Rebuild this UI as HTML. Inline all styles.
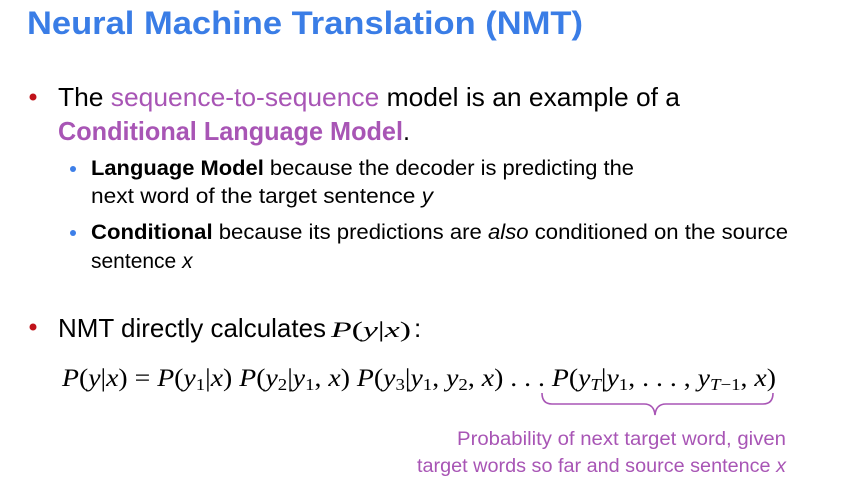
<!DOCTYPE html>
<html><head><meta charset="utf-8"><style>
html,body{margin:0;padding:0;background:#fff;width:856px;height:484px;overflow:hidden}
svg{display:block}
.s{font-family:"Liberation Sans",sans-serif}
.m{font-family:"Liberation Serif",serif}
</style></head><body>
<svg width="856" height="484" viewBox="0 0 856 484" xmlns="http://www.w3.org/2000/svg">
<text class="s" x="27" y="34" font-size="32" font-weight="bold" fill="#3a7de6" textLength="556" lengthAdjust="spacingAndGlyphs">Neural Machine Translation (NMT)</text>

<circle cx="33" cy="97" r="3.5" fill="#c0121a"/>
<text class="s" x="58" y="106" font-size="26" fill="#000" textLength="622" lengthAdjust="spacingAndGlyphs">The <tspan fill="#a855b5">sequence-to-sequence</tspan> model is an example of a</text>
<text class="s" x="58" y="140" font-size="26" fill="#000" textLength="352" lengthAdjust="spacingAndGlyphs"><tspan fill="#a855b5" font-weight="bold">Conditional Language Model</tspan>.</text>

<circle cx="73" cy="169" r="3" fill="#3d7fe8"/>
<text class="s" x="91" y="175" font-size="21" fill="#000" textLength="543" lengthAdjust="spacingAndGlyphs"><tspan font-weight="bold">Language Model</tspan> because the decoder is predicting the</text>
<text class="s" x="91" y="203" font-size="21" fill="#000" textLength="342" lengthAdjust="spacingAndGlyphs">next word of the target sentence <tspan font-style="italic">y</tspan></text>

<circle cx="73" cy="233" r="3" fill="#3d7fe8"/>
<text class="s" x="91" y="239" font-size="21" fill="#000" textLength="697" lengthAdjust="spacingAndGlyphs"><tspan font-weight="bold">Conditional</tspan> because its predictions are <tspan font-style="italic">also</tspan> conditioned on the source</text>
<text class="s" x="91" y="268" font-size="21" fill="#000">sentence <tspan font-style="italic">x</tspan></text>

<circle cx="33" cy="327" r="3.5" fill="#c0121a"/>
<text class="s" x="58" y="337" font-size="26" fill="#000" textLength="268" lengthAdjust="spacingAndGlyphs">NMT directly calculates</text>
<text class="m" x="331" y="337" font-size="22" fill="#000" textLength="80" lengthAdjust="spacingAndGlyphs"><tspan font-style="italic">P</tspan>(<tspan font-style="italic">y</tspan>|<tspan font-style="italic">x</tspan>)</text>
<text class="s" x="414" y="337" font-size="26" fill="#000">:</text>

<text class="m" x="62" y="386" font-size="25" fill="#000" textLength="714" lengthAdjust="spacingAndGlyphs"><tspan font-style="italic">P</tspan>(<tspan font-style="italic">y</tspan>|<tspan font-style="italic">x</tspan>) = <tspan font-style="italic">P</tspan>(<tspan font-style="italic">y</tspan><tspan font-size="17" dy="4">1</tspan><tspan dy="-4">|</tspan><tspan font-style="italic">x</tspan>) <tspan font-style="italic">P</tspan>(<tspan font-style="italic">y</tspan><tspan font-size="17" dy="4">2</tspan><tspan dy="-4">|</tspan><tspan font-style="italic">y</tspan><tspan font-size="17" dy="4">1</tspan><tspan dy="-4">, </tspan><tspan font-style="italic">x</tspan>) <tspan font-style="italic">P</tspan>(<tspan font-style="italic">y</tspan><tspan font-size="17" dy="4">3</tspan><tspan dy="-4">|</tspan><tspan font-style="italic">y</tspan><tspan font-size="17" dy="4">1</tspan><tspan dy="-4">, </tspan><tspan font-style="italic">y</tspan><tspan font-size="17" dy="4">2</tspan><tspan dy="-4">, </tspan><tspan font-style="italic">x</tspan>) . . . <tspan font-style="italic">P</tspan>(<tspan font-style="italic">y</tspan><tspan font-size="17" dy="4" font-style="italic">T</tspan><tspan dy="-4">|</tspan><tspan font-style="italic">y</tspan><tspan font-size="17" dy="4">1</tspan><tspan dy="-4">, . . . , </tspan><tspan font-style="italic">y</tspan><tspan font-size="17" dy="4"><tspan font-style="italic">T</tspan>−1</tspan><tspan dy="-4">, </tspan><tspan font-style="italic">x</tspan>)</text>

<path d="M542 393 Q542 404 552 404 L644 404 Q654 404 655 415 Q656 404 666 404 L763 404 Q773 404 773 393" fill="none" stroke="#a855b5" stroke-width="1.6"/>

<text class="s" x="457" y="445" font-size="19" fill="#a855b5" textLength="329" lengthAdjust="spacingAndGlyphs">Probability of next target word, given</text>
<text class="s" x="417" y="472" font-size="19" fill="#a855b5" textLength="369" lengthAdjust="spacingAndGlyphs">target words so far and source sentence <tspan font-style="italic">x</tspan></text>
</svg>
</body></html>
